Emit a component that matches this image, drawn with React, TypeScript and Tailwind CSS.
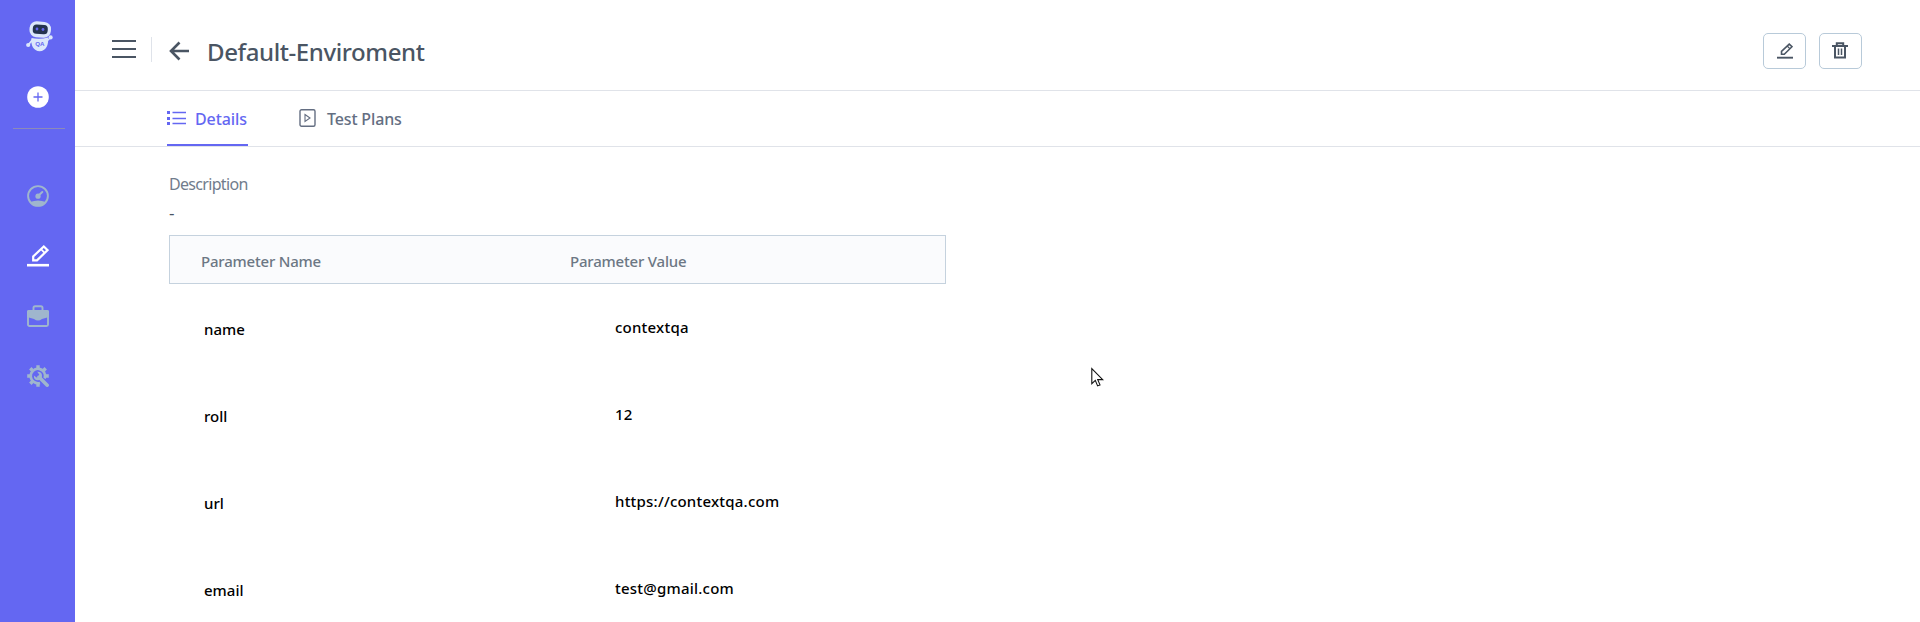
import React from "react";

const rows = [
  ["name", "contextqa"],
  ["roll", "12"],
  ["url", "https://contextqa.com"],
  ["email", "test@gmail.com"],
];

function Pencil({ className }: { className: string }) {
  return (
    <svg className={className} viewBox="0 0 22 22" fill="none" stroke="currentColor">
      <path d="M6.2 15.400v-4L16.800 1.500l3.800 3.600-10.600 10.300z" strokeWidth="2.200" />
      <path d="M14 4.200l3.600 3.600" strokeWidth="1.700" />
      <path d="M0 20.200h22" strokeWidth="2.600" />
    </svg>
  );
}

function Robot() {
  return (
    <svg className="h-[32px] w-[28px]" viewBox="0 0 28 32">
      <g fill="#dbe7fb">
        <rect x="3.500" y="1.600" width="21.500" height="15.800" rx="7" transform="rotate(4 14 9)" />
        <path d="M5.500 18c5 1 11 1 16.500-.5 1 7-2 13.700-8.300 13.700S4.500 25 5.500 18z" />
        <circle cx="2.200" cy="25" r="2.100" />
        <circle cx="24.600" cy="17.400" r="2.100" />
        <path d="M2 24l4-5 1 2-4 4zM20 21l4-4 1 1-4 4z" />
      </g>
      <rect x="6.800" y="4.800" width="15" height="9.200" rx="3.800" fill="#24344f" transform="rotate(4 14 9)" />
      <circle cx="11" cy="9" r="1.400" fill="#6467f2" />
      <circle cx="17" cy="9.500" r="1.400" fill="#6467f2" />
      <text x="9.200" y="26.200" fontSize="6.200" fontWeight="700" fontFamily="Liberation Sans, sans-serif" fill="#6467f2">QA</text>
    </svg>
  );
}

export default function App() {
  return (
    <div className="relative flex h-[622px] w-full overflow-hidden bg-white font-['Noto_Sans','Open_Sans',sans-serif] text-[#4a5563]">
      <aside className="flex w-[75px] shrink-0 flex-col items-center bg-[#6467f2] pl-px text-[#9fb6cd]">
        <div className="mt-[20px] ml-1"><Robot /></div>
        <svg className="mt-[34px] size-[22px]" viewBox="0 0 22 22">
          <circle cx="11" cy="11" r="10.800" fill="white" />
          <path d="M11 6.500v9M6.500 11h9" stroke="#6467f2" strokeWidth="1.300" />
        </svg>
        <div className="mt-[20px] ml-[2px] h-px w-[52px] bg-[#8c8ab8]" />
        <svg className="mt-[56px] size-[22px]" viewBox="0 0 22 22" fill="none" stroke="currentColor">
          <circle cx="11" cy="11" r="9.900" strokeWidth="1.900" />
          <path d="M3.200 17q7.800-3 15.600 0-3 4.300-7.800 4.300t-7.800-4.300z" fill="currentColor" stroke="none" />
          <circle cx="11" cy="11.200" r="2.600" fill="currentColor" stroke="none" />
          <path d="M11 11l4.300-4" strokeWidth="2" strokeLinecap="round" />
        </svg>
        <Pencil className="mt-[38px] size-[22px] text-white" />
        <svg className="mt-[38px] size-[22px]" viewBox="0 0 22 22" fill="none" stroke="currentColor">
          <path d="M6.500 5V2.800q0-1.600 1.600-1.600h5.800q1.600 0 1.600 1.600V5" strokeWidth="1.900" />
          <rect x="1" y="6" width="20" height="15" rx="1.500" strokeWidth="1.900" />
          <path d="M0 6.500Q0 5 1.500 5h19Q22 5 22 6.500V12l-7 2q-4 3-8 0l-7-2z" fill="currentColor" stroke="none" />
        </svg>
        <svg className="mt-[38px] size-[22px]" viewBox="0 0 22 22" fill="none" stroke="currentColor">
          <path d="M17.700 13.500A7.200 7.200 0 1 0 13 17.900" strokeWidth="2.600" />
          <path d="M11 .2v3.500M11 18v3.800M.2 11h3.500M18.300 11h3.500M3.300 3.300l2.400 2.400M16.300 5.700l2.400-2.400M3.300 18.700l2.400-2.400" strokeWidth="3.400" />
          <path d="M12 12l8.200 8.200" strokeWidth="3.500" strokeLinecap="round" />
          <path d="M10.200 6.800q4.800-.3 4.800 4.200-.2 4.200-4.200 4.200-4.200-.2-3.900-4.800l2.700 2.200 2-.6.600-2.500z" fill="currentColor" stroke="none" />
        </svg>
      </aside>
      <main className="min-w-0 flex-1">
        <header className="flex h-[91px] items-start border-b border-[#e0e3e9] pl-[37px]">
          <svg className="mt-[40px] h-[18px] w-[24px]" viewBox="0 0 24 18">
            <path d="M0 1h24M0 9h24M0 17h24" stroke="currentColor" strokeWidth="2" />
          </svg>
          <div className="mt-[37px] ml-[15px] h-[25px] w-px bg-[#dfe3ea]" />
          <svg className="mt-[41px] ml-[17px] h-[20px] w-[21px]" viewBox="0 0 21 20" fill="none" stroke="currentColor" strokeWidth="2.600">
            <path d="M20 10H2M10.500 1.500L2 10l8.500 8.500" />
          </svg>
          <h1 className="mt-[34px] ml-[17px] text-[24px] leading-[36px] font-medium tracking-[-0.4px] whitespace-nowrap">Default-Enviroment</h1>
          <div className="mt-[33px] mr-[58px] ml-auto flex gap-[13px]">
            <button className="flex h-[36px] w-[43px] items-center justify-center rounded-[5px] border border-[#b8cad9]">
              <Pencil className="mb-px size-[16px]" />
            </button>
            <button className="flex h-[36px] w-[43px] items-center justify-center rounded-[5px] border border-[#b8cad9]">
              <svg className="mr-px mb-px h-[17px] w-[16px]" viewBox="0 0 16 17" fill="none" stroke="currentColor">
                <path d="M0 4h16M4.800 4V1.200h6.400V4M3 4v11.600h10V4" strokeWidth="2" />
                <path d="M6.500 6.500v6.500M9.500 6.500v6.500" strokeWidth="1.500" />
              </svg>
            </button>
          </div>
        </header>
        <nav className="flex h-[56px] border-b border-[#e0e3e9] pl-[92px] text-[16px] font-medium">
          <div className="flex h-[55px] w-[81px] items-center border-b-2 border-[#6467f2] text-[#6467f2]">
            <svg className="h-[14px] w-[19px] shrink-0" viewBox="0 0 19 14" stroke="currentColor">
              <path d="M0 1.500h3M0 7.500h3M0 12.500h3" strokeWidth="3" />
              <path d="M5.500 1.500H19M5.500 7.500H19M5.500 12.500H19" strokeWidth="1.600" />
            </svg>
            <span className="ml-[9px] pt-[2px] tracking-[-0.1px]">Details</span>
          </div>
          <div className="ml-[51px] flex h-[54px] items-center text-[#646e82]">
            <svg className="h-[18px] w-[17px] shrink-0" viewBox="0 0 17 18" fill="none" stroke="currentColor">
              <rect x="1" y=".7" width="15" height="16.600" rx="1.500" strokeWidth="1.400" />
              <path d="M6 5.500l5 3.500-5 3.500z" strokeWidth="1.100" />
            </svg>
            <span className="ml-[11px] pt-[2px] tracking-[-0.15px]">Test Plans</span>
          </div>
        </nav>
        <section className="pt-[25px] pl-[94px] text-[15px]">
          <div className="text-[16px] leading-[24px] tracking-[-0.68px] text-[#717c8c]">Description</div>
          <div className="mt-[5px] h-[24px] text-[17px] leading-[24px]">-</div>
          <div className="mt-[10px] flex h-[49px] w-[777px] items-center border border-[#c5d2de] bg-[#fafbfd] pt-[3px] font-medium tracking-[-0.2px] text-[#6c7784]">
            <div className="w-[368px] pl-[31px]">Parameter Name</div>
            <div className="pl-[32px]">Parameter Value</div>
          </div>
          {rows.map(([name, value]) => (
            <div key={name} className="flex h-[87px] items-center font-medium text-black">
              <div className="w-[446px] pt-[3px] pl-[35px]">{name}</div>
              <div className="tracking-[0.22px]">{value}</div>
            </div>
          ))}
        </section>
      </main>
      <svg className="absolute top-[367px] left-[1091px] h-[21px] w-[13px]" viewBox="0 0 13 21">
        <path d="M.8 1.500v15.200l3.500-3.300 2.300 5.500 2.400-1-2.300-5.300h5z" fill="white" stroke="#111" strokeWidth="1.100" />
      </svg>
    </div>
  );
}
